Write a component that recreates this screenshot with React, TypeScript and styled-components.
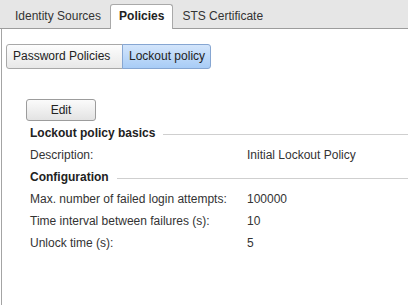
import React from "react";
import styled, { createGlobalStyle, css } from "styled-components";

const Global = createGlobalStyle`
  html, body { margin: 0; padding: 0; background: #ffffff; }
  body { font-family: "Liberation Sans", Arial, sans-serif; font-size: 12px; color: #333; }
`;

const Page = styled.div`
  display: flex;
  flex-direction: column;
  height: 100vh;
  overflow: hidden;
`;

const TabBar = styled.div`
  display: flex;
  align-items: flex-end;
  height: 28px;
  padding-left: 6px;
  background: #e6e6e6;
  border-bottom: 1px solid #9c9c9c;
  flex: none;
`;

const Tab = styled.div<{ $active?: boolean }>`
  box-sizing: border-box;
  height: 24px;
  line-height: 23px;
  padding: 0 8px;
  border: 1px solid transparent;
  border-bottom: none;
  color: #333;
  font-size: 12px;
  white-space: nowrap;
  ${(p) =>
    p.$active &&
    css`
      height: 25px;
      margin-bottom: -1px;
      background: #ffffff;
      border-color: #a9a9a9;
      border-radius: 3px 3px 0 0;
      font-weight: bold;
      color: #222;
    `}
`;

const Content = styled.div`
  flex: 1;
  margin-left: 1px;
  border-left: 1px solid #a4a4a4;
  background: #ffffff;
  padding-top: 15px;
  padding-left: 4px;
`;

const ButtonGroup = styled.div`
  display: flex;
  height: 25px;
`;

const SegButton = styled.div<{ $selected?: boolean; $w: number }>`
  box-sizing: border-box;
  width: ${(p) => p.$w}px;
  height: 25px;
  line-height: 23px;
  padding-left: 6px;
  border: 1px solid #a8a8a8;
  color: #222;
  white-space: nowrap;
  background: linear-gradient(#fdfdfd, #e8e8e8);
  &:first-child {
    border-radius: 3px 0 0 3px;
  }
  &:last-child {
    border-radius: 0 3px 3px 0;
    margin-left: -1px;
  }
  ${(p) =>
    p.$selected &&
    css`
      background: linear-gradient(#d3e5fb, #a8ccf6);
      border-color: #86a6d2;
      position: relative;
    `}
`;

const Section = styled.div`
  margin-top: 30px;
  padding-left: 20px;
`;

const EditButton = styled.div`
  box-sizing: border-box;
  width: 70px;
  height: 22px;
  line-height: 20px;
  text-align: center;
  border: 1px solid #9c9c9c;
  border-radius: 3px;
  background: linear-gradient(#fbfbfb, #e3e3e3);
  color: #222;
`;

const Rows = styled.div`
  margin-top: 1px;
  padding-left: 4px;
`;

const Heading = styled.div`
  display: flex;
  align-items: center;
  gap: 8px;
  height: 22px;
  font-weight: bold;
  color: #222;
  white-space: nowrap;
  &::after {
    content: "";
    flex: 1;
    height: 1px;
    margin-top: 2px;
    background: #cfcfcf;
  }
`;

const Row = styled.div`
  display: grid;
  grid-template-columns: 217px auto;
  height: 22px;
  line-height: 22px;
  color: #333;
  white-space: nowrap;
`;

const data = {
  basics: [["Description:", "Initial Lockout Policy"]],
  config: [
    ["Max. number of failed login attempts:", "100000"],
    ["Time interval between failures (s):", "10"],
    ["Unlock time (s):", "5"],
  ],
};

export default function App() {
  return (
    <Page>
      <Global />
      <TabBar>
        <Tab>Identity Sources</Tab>
        <Tab $active>Policies</Tab>
        <Tab>STS Certificate</Tab>
      </TabBar>
      <Content>
        <ButtonGroup>
          <SegButton $w={117}>Password Policies</SegButton>
          <SegButton $w={89} $selected>
            Lockout policy
          </SegButton>
        </ButtonGroup>
        <Section>
          <EditButton>Edit</EditButton>
          <Rows>
            <Heading>Lockout policy basics</Heading>
            {data.basics.map(([k, v]) => (
              <Row key={k}>
                <span>{k}</span>
                <span>{v}</span>
              </Row>
            ))}
            <Heading>Configuration</Heading>
            {data.config.map(([k, v]) => (
              <Row key={k}>
                <span>{k}</span>
                <span>{v}</span>
              </Row>
            ))}
          </Rows>
        </Section>
      </Content>
    </Page>
  );
}
